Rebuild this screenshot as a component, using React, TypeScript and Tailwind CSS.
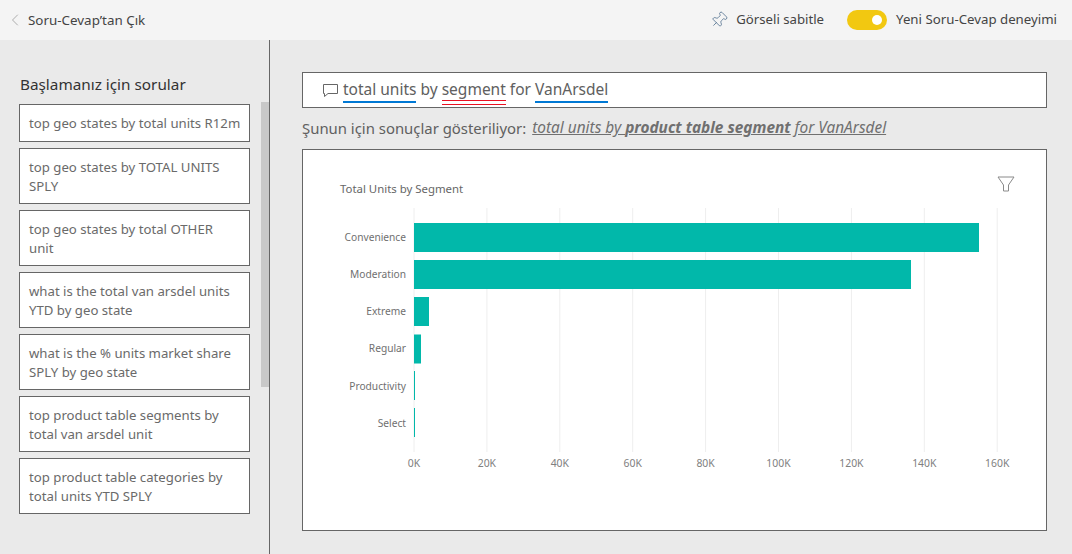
import { ChevronLeft, Pin } from "lucide-react";

const questions = [
  { text: "top geo states by total units R12m", h: "h-[38px]" },
  { text: "top geo states by TOTAL UNITS SPLY", h: "h-[56px]" },
  { text: "top geo states by total OTHER\nunit", h: "h-[56px]" },
  { text: "what is the total van arsdel units YTD by geo state", h: "h-[56px]" },
  { text: "what is the % units market share SPLY by geo state", h: "h-[56px]" },
  { text: "top product table segments by total van arsdel unit", h: "h-[56px]" },
  { text: "top product table categories by total units YTD SPLY", h: "h-[56px]" },
];

const bars = [
  { label: "Convenience", y: 223, w: 565, ly: 241 },
  { label: "Moderation", y: 260, w: 497, ly: 278 },
  { label: "Extreme", y: 297, w: 15, ly: 315 },
  { label: "Regular", y: 334.5, w: 7, ly: 352 },
  { label: "Productivity", y: 371, w: 1, ly: 390 },
  { label: "Select", y: 408, w: 1, ly: 427 },
];

const ticks = ["0K", "20K", "40K", "60K", "80K", "100K", "120K", "140K", "160K"];

// svg origin is the chart card's inner corner
const ox = 303;
const oy = 150;

function Chart() {
  return (
    <svg width="743" height="380" className="block" style={{ fontFamily: '"Noto Sans", sans-serif' }}>
      <text x={340 - ox} y={193 - oy} fontSize="11.4" fill="#666">
        Total Units by Segment
      </text>
      {/* filter icon */}
      <path d="M695 27 H711 L705.5 35 V41 H700.5 V35 Z" fill="none" stroke="#8a8a8a" strokeWidth="1" />
      {ticks.map((t, i) => {
        const x = 414 - ox + i * 72.9;
        return (
          <g key={t}>
            <line x1={x} x2={x} y1={208 - oy} y2={452 - oy} stroke="#eeeeee" strokeWidth="1" />
            <text x={x} y={467 - oy} fontSize="10.4" fill="#808080" textAnchor="middle">
              {t}
            </text>
          </g>
        );
      })}
      {bars.map((b) => (
        <g key={b.label}>
          <rect x={414 - ox} y={b.y - oy} width={b.w} height={29} fill="#01b8aa" />
          <text x={406 - ox} y={b.ly - oy} fontSize="10.2" fill="#707070" textAnchor="end">
            {b.label}
          </text>
        </g>
      ))}
    </svg>
  );
}

export default function App() {
  return (
    <div className="h-[554px] w-[1072px] overflow-hidden bg-[#eaeaea] font-['Noto_Sans',sans-serif] text-[#444]">
      {/* top bar */}
      <header className="flex h-10 items-center justify-between bg-[#f4f4f4] pl-[5px] pr-[15px]">
        <div className="flex items-center gap-[3px]">
          <ChevronLeft size={20} strokeWidth={0.8} className="text-[#888]" />
          <span className="text-[13.4px] text-[#444]">Soru-Cevap’tan Çık</span>
        </div>
        <div className="flex items-center">
          <Pin size={18} strokeWidth={1} className="mr-2 rotate-45 text-[#4a6a8a]" />
          <span className="mr-[23px] text-[13.2px]">Görseli sabitle</span>
          <div className="mr-[9px] flex h-5 w-10 items-center justify-end rounded-full bg-[#f2c811] pr-[5px]">
            <div className="h-2.5 w-2.5 rounded-full bg-white" />
          </div>
          <span className="text-[13.25px]">Yeni Soru-Cevap deneyimi</span>
        </div>
      </header>

      <div className="flex h-[514px]">
        {/* questions */}
        <aside className="relative w-[270px] shrink-0 border-r border-[#666] pl-[19px]">
          <h2 className="mt-[34px] mb-[9px] h-[21px] pl-px text-[15.3px] leading-[21px] text-[#333]">
            Başlamanız için sorular
          </h2>
          <div className="flex w-[231px] flex-col gap-1.5">
            {questions.map((q) => (
              <div
                key={q.text}
                className={`whitespace-pre-line border border-[#666] bg-white pl-[9px] pr-1 pt-[9px] text-[13.2px] leading-[19px] text-[#6a6a6a] ${q.h}`}
              >
                {q.text}
              </div>
            ))}
          </div>
          <div className="absolute left-[261px] top-[62px] h-[285px] w-2 bg-[#c8c8c8]" />
        </aside>

        {/* result */}
        <main className="flex-1 pl-8 pt-8">
          <div className="flex h-9 w-[745px] items-center border border-[#666] bg-white pl-[19px] text-[15.5px]">
            <svg width="17" height="15" viewBox="0 0 17 15" className="mr-[4px] mt-[1px] shrink-0" fill="none" stroke="#666">
              <path d="M1.5 1.5 H15.5 V10.5 H6 L2.5 13.5 V10.5 H1.5 Z" />
            </svg>
            <div className="mt-[5px] leading-[19px] text-[#606060]">
              <span className="inline-block border-b-2 border-[#0078d4] pb-[2px]">total units</span>
              <span> by </span>
              <span className="inline-block border-b border-[#e81123] pb-[3px]">
                <span className="inline-block border-b border-[#e81123] pb-px">segment</span>
              </span>
              <span> for </span>
              <span className="inline-block border-b-2 border-[#0078d4] pb-[2px]">VanArsdel</span>
            </div>
          </div>
          <div className="flex h-[41px] w-[745px] items-center text-[#606060]">
            <span className="mb-px text-[14.9px]">Şunun için sonuçlar gösteriliyor:</span>
            <span className="mb-px ml-[6px] text-[15.4px] italic text-[#707070] underline">
              total units by <b>product table segment</b> for VanArsdel
            </span>
          </div>
          <div className="h-[382px] w-[745px] border border-[#666] bg-white">
            <Chart />
          </div>
        </main>
      </div>
    </div>
  );
}
